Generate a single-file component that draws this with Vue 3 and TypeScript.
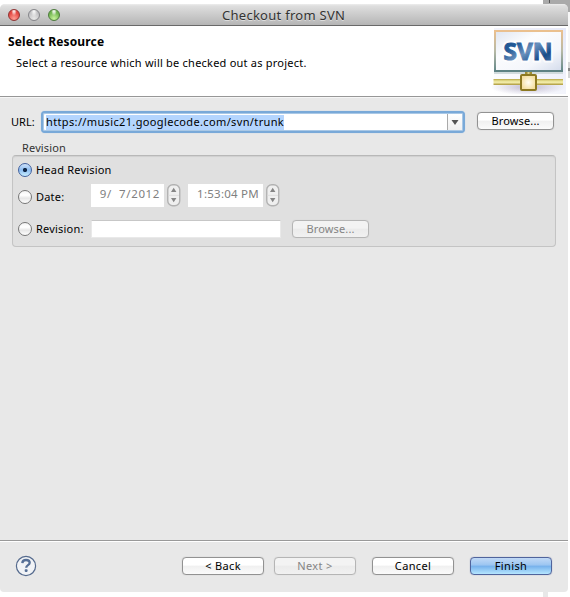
<script setup lang="ts">
import { ref } from 'vue'

type Mode = 'head' | 'date' | 'revision'
const mode = ref<Mode>('head')
const url = 'https://music21.googlecode.com/svn/trunk'
const lights: string[] = ['red', 'gray', 'green']
const actions = [
  { label: '< Back', kind: 'back' },
  { label: 'Next >', kind: 'next' },
  { label: 'Cancel', kind: 'cancel' },
  { label: 'Finish', kind: 'finish' },
]
</script>

<template>
  <div class="desktop">
    <div class="behind-top"></div>
    <div class="behind-side"></div>
    <div class="behind-bottom"></div>
    <main class="window">
      <header class="titlebar">
        <div class="lights">
          <i v-for="l in lights" :key="l" class="light" :class="l"></i>
        </div>
        <span class="t title">Checkout from SVN</span>
      </header>

      <section class="banner">
        <div class="heading">
          <h1 class="t">Select Resource</h1>
          <p class="t">Select a resource which will be checked out as project.</p>
        </div>
        <svg class="logo" width="74" height="66" viewBox="0 0 74 66">
          <defs>
            <linearGradient id="bg" x1="0" y1="1" x2="1" y2="0">
              <stop offset="0" stop-color="#fff" />
              <stop offset="1" stop-color="#e6e9f8" />
            </linearGradient>
            <linearGradient id="frame" x1="0" y1="0" x2="0" y2="1">
              <stop offset="0" stop-color="#ebc08e" />
              <stop offset=".5" stop-color="#b7b9a6" />
              <stop offset="1" stop-color="#648889" />
            </linearGradient>
            <linearGradient id="screen" x1="0" y1="0" x2="1" y2="1">
              <stop offset="0" stop-color="#dfe5f0" />
              <stop offset=".35" stop-color="#fbfcfe" />
              <stop offset=".7" stop-color="#f4f6fb" />
              <stop offset="1" stop-color="#d3dbeb" />
            </linearGradient>
            <linearGradient id="ink" x1="0" y1="0" x2="1" y2="1">
              <stop offset="0" stop-color="#164a88" />
              <stop offset=".3" stop-color="#245b98" />
              <stop offset=".5" stop-color="#6990bd" />
              <stop offset=".75" stop-color="#174b88" />
              <stop offset="1" stop-color="#5a84b5" />
            </linearGradient>
            <linearGradient id="pipe" x1="0" y1="0" x2="0" y2="1">
              <stop offset="0" stop-color="#b5a542" />
              <stop offset=".3" stop-color="#e4dc8c" />
              <stop offset=".55" stop-color="#f6f0ae" />
              <stop offset="1" stop-color="#aa9637" />
            </linearGradient>
            <radialGradient id="shade">
              <stop offset="0" stop-color="#aaa0bc" stop-opacity=".75" />
              <stop offset="1" stop-color="#b9b2cb" stop-opacity="0" />
            </radialGradient>
            <radialGradient id="node">
              <stop offset="0" stop-color="#fffdf2" />
              <stop offset="1" stop-color="#f4dfa0" />
            </radialGradient>
          </defs>
          <rect x="2" width="72" height="66" fill="url(#bg)" />
          <ellipse cx="36" cy="59" rx="38" ry="8" fill="url(#shade)" />
          <rect x="2" y="42" width="69" height="4" fill="#d1dbdd" />
          <rect x="3" y="3" width="67" height="40" fill="url(#screen)" stroke="url(#frame)" stroke-width="2" />
          <path d="M2 43H71" stroke="#5e8283" stroke-width="2" />
          <text x="11.500" y="32" class="svn" stroke="#fff" stroke-width="5" stroke-opacity=".7" fill="none" textLength="49" lengthAdjust="spacingAndGlyphs">SVN</text>
          <text x="11.500" y="32" class="svn" fill="url(#ink)" stroke="url(#ink)" stroke-width="1" textLength="49" lengthAdjust="spacingAndGlyphs">SVN</text>
          <rect x="33" y="44" width="7" height="4" fill="#a09036" />
          <rect x="35.500" y="44" width="2" height="3" fill="#dbd493" />
          <rect x="1.500" y="51" width="69.500" height="6" fill="url(#pipe)" />
          <rect x="29" y="47" width="15" height="15" rx="1" fill="url(#node)" stroke="#8c7921" stroke-width="2" />
        </svg>
      </section>

      <section class="content">
        <div class="url-row">
          <label class="t url-label">URL:</label>
          <div class="combo">
            <div class="field"><span class="t selected">{{ url }}</span></div>
            <div class="drop"><svg width="8" height="5"><path d="M.5 0h7L4 5z" fill="#555" /></svg></div>
          </div>
          <button class="btn browse"><span class="t">Browse...</span></button>
        </div>

        <div class="t legend">Revision</div>
        <div class="group">
          <div class="row head">
            <i class="radio" :class="{ on: mode === 'head' }" @click="mode = 'head'"></i>
            <span class="t name">Head Revision</span>
          </div>
          <div class="row date">
            <i class="radio" :class="{ on: mode === 'date' }" @click="mode = 'date'"></i>
            <span class="t name">Date:</span>
            <div class="picker day"><span class="t">9/&nbsp; 7/2012</span></div>
            <svg v-for="n in 2" :key="n" class="stepper" :class="'s' + n" width="14" height="23" viewBox="0 0 14 23">
              <rect x=".75" y=".75" width="12" height="21" rx="5" fill="#efefef" stroke="#b2b2b2" stroke-width="1.4" />
              <path d="M1.500 11.300h10.500" stroke="#dedede" />
              <path d="M4 8l2.700-4.200L9.400 8zM4 14l2.700 4.200L9.400 14z" fill="#858585" />
            </svg>
            <div class="picker time"><span class="t">1:53:04 PM</span></div>
          </div>
          <div class="row revision">
            <i class="radio" :class="{ on: mode === 'revision' }" @click="mode = 'revision'"></i>
            <span class="t name">Revision:</span>
            <div class="input"></div>
            <button class="btn off browse2"><span class="t">Browse...</span></button>
          </div>
        </div>
      </section>

      <footer class="footer">
        <svg class="help" width="22" height="22" viewBox="0 0 22 22">
          <circle cx="11" cy="11" r="9.600" fill="#f1f3f6" stroke="#566b8e" stroke-width="1.200" />
          <path d="M7.300 8.100C7.500 5.800 9 5 11 5c2.200 0 3.700 1 3.700 2.700 0 2.600-3.500 2.200-3.500 5" fill="none" stroke="#566f96" stroke-width="2.300" />
          <rect x="9.700" y="14.300" width="2.900" height="2.600" rx=".8" fill="#566f96" />
        </svg>
        <button v-for="a in actions" :key="a.kind" class="btn action" :class="[a.kind, { off: a.kind === 'next' }]">
          <span class="t">{{ a.label }}</span>
        </button>
      </footer>
    </main>
  </div>
</template>

<style>
body { margin: 0; overflow: hidden; }
</style>

<style scoped>
* { box-sizing: border-box; }
.desktop { position: relative; width: 570px; height: 597px; padding-top: 4px; background: #fff; overflow: hidden; font-family: "Noto Sans", "Open Sans", sans-serif; font-size: 11px; color: #000; }
.behind-top { position: absolute; left: 543px; top: 0; width: 27px; height: 12px; background: linear-gradient(90deg, #aaa 6px, #555 6px, #555 7px, #aaa 7px); background-size: 27px 3px; background-color: #aaa; background-repeat: no-repeat; }
.behind-side { position: absolute; left: 568px; top: 6px; width: 2px; height: 72px; background: linear-gradient(#aaa 6px, #f7f7f7 6px, #f7f7f7 56px, #d5d5d5 56px, #d5d5d5 62px, #888 62px, #888 65px, #d5d5d5 65px); }
.behind-bottom { position: absolute; left: 543px; top: 588px; width: 5px; height: 9px; background: #e8e8e8; }
.window { position: relative; width: 568px; height: 588px; display: flex; flex-direction: column; background: #e8e8e8; border-radius: 5px 5px 4px 4px; overflow: hidden; }
.t { white-space: pre; line-height: 16px; }
.titlebar { height: 22px; flex: none; display: grid; grid-template-columns: 222px 1fr; border-bottom: 1px solid #696969; background: linear-gradient(#ededed 0, #dedede 2px, #b5b5b5 100%); }
.lights { display: flex; gap: 8px; padding: 5px 0 0 8px; }
.light { width: 12px; height: 12px; border-radius: 50%; border: 1px solid #85858a; }
.light.red { border-color: #8f3434; background: radial-gradient(ellipse at 50% 12%, #fff 0, #f2a19c 22%, transparent 38%), radial-gradient(circle at 50% 85%, #ff9e94, #e3453f 65%); }
.light.gray { background: radial-gradient(ellipse at 50% 12%, #fff 0, transparent 45%), radial-gradient(circle at 50% 85%, #e8e8e8, #bdbdc0 75%); }
.light.green { border-color: #4c7a3c; background: radial-gradient(ellipse at 50% 12%, #fff 0, #bddbac 22%, transparent 38%), radial-gradient(circle at 50% 85%, #c9f49d, #70b44f 65%); }
.title { font-size: 13px; line-height: 23px; letter-spacing: .27px; color: #333; text-shadow: 0 1px 0 #ddd; }
.banner { height: 71px; flex: none; display: flex; justify-content: space-between; background: #fff; border-bottom: 1px solid #979797; }
.heading { padding: 8px 0 0 8px; }
h1 { margin: 0; font-size: 12px; font-weight: 700; letter-spacing: .16px; }
.heading p { margin: 5px 0 0 8px; letter-spacing: .225px; }
.logo { margin: 2px 2px 0 0; }
.svn { font: 700 24px "Open Sans", sans-serif; }
.content { flex: 1; border-top: 1px solid #f6f6f6; padding: 13px 12px 0 11px; }
.url-row { display: flex; height: 24px; }
.url-label { width: 30px; padding-top: 3px; }
.combo { width: 424px; height: 22px; display: flex; border: 2px solid #79a9d8; border-radius: 4px; background: #fff; box-shadow: inset 0 0 0 1px #a9c8e6, 0 0 1px #9bc0e5; }
.field { flex: 1; padding: 2px 0 0 3px; border-right: 1px solid #aaa; margin: 1px 0; display: flex; }
.field .selected { display: block; width: 238px; height: 15px; line-height: 14px; letter-spacing: .36px; background: #b4d5fe; margin-top: -1px; }
.drop { width: 14px; display: flex; align-items: center; justify-content: center; background: linear-gradient(#fff, #f0f0f0); margin: 1px 1px 1px 0; }
.btn { flex: none; height: 18px; padding: 0; display: flex; align-items: center; justify-content: center; font: inherit; letter-spacing: .15px; color: #000; border: 1px solid #929292; border-radius: 4px; background: linear-gradient(#fff 0, #fff 45%, #f0f0f0 50%, #fbfbfb); box-shadow: 0 0 1px #aaa; }
.btn.off { color: #858585; border-color: #b5b5b5; background: linear-gradient(#f3f3f3 45%, #ebebeb 50%, #f1f1f1); box-shadow: 0 0 1px #c5c5c5; }
.browse { width: 77px; margin: 1px 0 0 12px; }
.legend { margin: 5px 0 0 11px; height: 15px; color: #333; letter-spacing: .15px; }
.group { width: 544px; height: 92px; margin-left: 1px; border: 1px solid #c4c4c4; border-top-color: #b8b8b8; border-radius: 4px; background: #e0e0e0; box-shadow: inset 0 1px 1px #d0d0d0; padding: 0 5px; }
.row { display: flex; align-items: center; }
.row.head { height: 28px; }
.row.date { height: 23px; }
.row.revision { height: 18px; margin-top: 13px; }
.radio { flex: none; width: 14px; height: 14px; border: 1px solid #777; border-radius: 50%; background: linear-gradient(#f4f4f4, #fff 35%, #e6e6e6 60%, #fff); margin-right: 4px; }
.radio.on { border-color: #42619e; background: radial-gradient(circle, #102848 0 1.7px, transparent 2.5px), linear-gradient(#cfe3fa, #8cbcf1 50%, #c9efff); }
.name { width: 55px; letter-spacing: .2px; }
.row.date .radio { margin-top: 3px; }
.row.date .name { padding-top: 3px; }
.picker { height: 23px; background: #fff; color: #808080; text-align: right; padding-right: 4px; font-size: 11.5px; }
.picker .t { line-height: 20px; display: block; }
.day { width: 73px; order: 1; letter-spacing: .62px; }
.s1 { order: 2; margin: 0 7px 0 3px; }
.time { width: 75px; order: 3; letter-spacing: .25px; }
.s2 { order: 4; margin-left: 3px; }
.input { width: 190px; height: 18px; background: #fff; border: 1px solid #e9e9e9; border-top-color: #c7c7c7; }
.browse2 { width: 77px; margin-left: 11px; }
.footer { height: 52px; flex: none; border-top: 1px solid #999; box-shadow: inset 0 1px 0 #fff; display: flex; padding: 14px 0 0 15px; }
.help { margin-right: 145px; }
.action { width: 82px; margin-top: 2px; letter-spacing: .35px; }
.action .t { margin-top: -1px; }
.next { margin-left: 10px; }
.cancel, .finish { margin-left: 16px; }
.finish { border-color: #50649c; background: linear-gradient(#c1d9f6 0, #9bc5f1 45%, #75b0eb 50%, #b5e6ff); box-shadow: 0 0 1px #7682b0; }
</style>
